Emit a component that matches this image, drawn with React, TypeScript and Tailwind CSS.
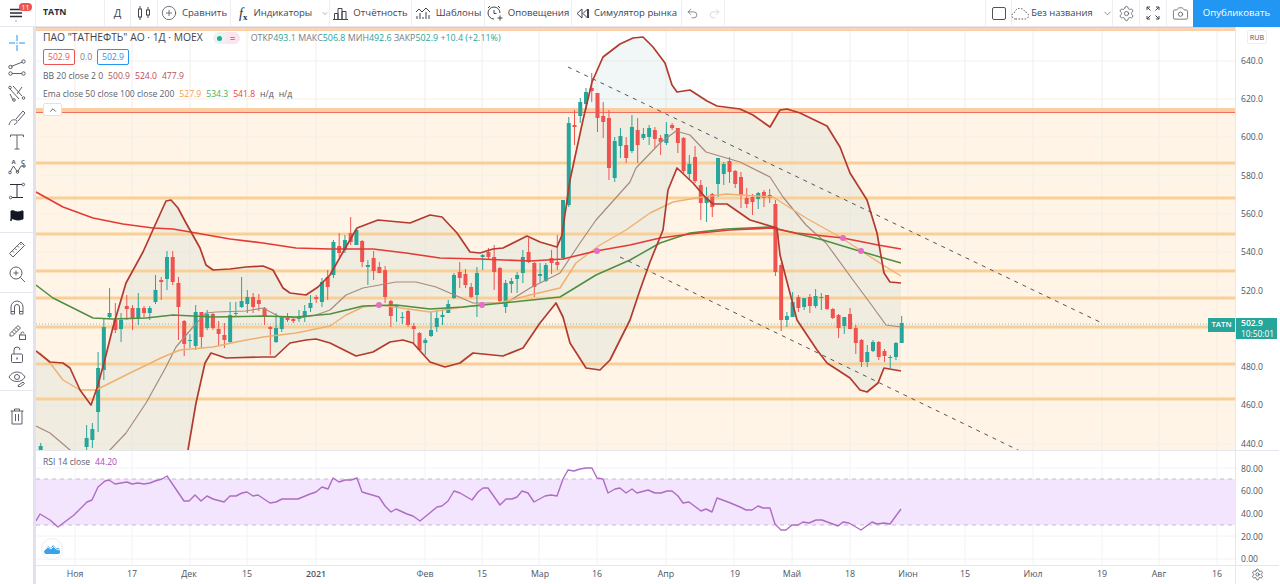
import type { ReactNode } from "react";
import { ChevronDown, ChevronUp, CirclePlus, Camera, Settings, Undo2, Redo2 } from "lucide-react";

// [high, body top, body bottom, low, up] in page pixels, one entry per day
const CANDLES: number[][] = [
  [443, 446, 455, 460, 1], [470, 480, 490, 500, 1], [470, 480, 490, 500, 1], [470, 480, 490, 500, 1], [470, 480, 490, 500, 1],
  [470, 480, 490, 500, 1], [470, 480, 490, 500, 1], [470, 480, 490, 500, 1], [425, 438, 447, 450, 1], [423, 429, 440, 448, 1],
  [352, 368, 412, 432, 1], [318, 327, 370, 380, 1], [288, 313, 317, 318, 1], [303, 320, 330, 333, 0], [313, 320, 329, 342, 1],
  [295, 306, 309, 320, 0], [305, 308, 318, 330, 0], [293, 308, 318, 325, 1], [306, 308, 313, 318, 0], [306, 308, 313, 320, 1],
  [275, 290, 302, 304, 1], [277, 280, 282, 300, 0], [251, 257, 279, 290, 1], [251, 257, 282, 285, 0], [277, 283, 307, 340, 0],
  [320, 321, 344, 356, 0], [334, 340, 341, 348, 1], [305, 312, 346, 350, 1], [312, 312, 337, 348, 0], [310, 314, 328, 330, 1],
  [313, 314, 328, 330, 0], [321, 329, 334, 345, 0], [323, 335, 340, 348, 0], [302, 315, 342, 343, 1], [302, 313, 314, 317, 1],
  [277, 301, 307, 308, 1], [290, 297, 304, 313, 1], [293, 297, 307, 313, 0], [294, 300, 304, 311, 0], [307, 308, 317, 325, 0],
  [326, 327, 329, 355, 0], [313, 328, 342, 343, 1], [317, 317, 329, 332, 1], [313, 318, 320, 322, 0], [318, 319, 321, 323, 0],
  [310, 317, 319, 322, 1], [305, 311, 317, 322, 1], [295, 303, 308, 312, 1], [295, 297, 299, 303, 0], [278, 282, 302, 307, 1],
  [270, 277, 287, 300, 0], [240, 242, 275, 278, 1], [233, 246, 253, 257, 0], [235, 240, 250, 253, 1], [217, 233, 242, 245, 0],
  [228, 230, 245, 245, 1], [240, 241, 262, 267, 0], [260, 265, 267, 285, 1], [251, 258, 271, 280, 0], [262, 267, 273, 273, 0],
  [266, 270, 297, 303, 0], [300, 301, 316, 327, 0], [305, 306, 308, 322, 1], [312, 317, 318, 324, 1], [310, 311, 325, 327, 0],
  [323, 326, 329, 343, 0], [332, 333, 350, 350, 0], [338, 340, 343, 355, 1], [312, 330, 336, 337, 1], [310, 318, 327, 332, 1],
  [310, 315, 317, 325, 1], [300, 304, 313, 313, 1], [273, 275, 298, 299, 1], [262, 272, 278, 288, 0], [269, 274, 285, 288, 0],
  [283, 287, 297, 298, 0], [267, 273, 295, 317, 1], [254, 255, 257, 270, 1], [248, 252, 257, 260, 0], [245, 257, 272, 290, 0],
  [267, 268, 301, 302, 0], [280, 283, 307, 313, 1], [278, 281, 284, 293, 1], [272, 275, 279, 293, 1], [250, 257, 273, 283, 1],
  [238, 252, 262, 263, 0], [262, 263, 287, 297, 0], [263, 274, 276, 283, 1], [263, 265, 281, 282, 1], [250, 258, 263, 274, 0],
  [235, 262, 265, 270, 0], [200, 200, 258, 260, 1], [117, 123, 205, 207, 1], [110, 125, 127, 145, 0], [98, 102, 116, 123, 1],
  [88, 92, 104, 110, 1], [73, 88, 91, 102, 0], [93, 93, 118, 132, 0], [102, 116, 122, 138, 0], [110, 118, 168, 180, 0],
  [137, 141, 178, 182, 1], [128, 136, 146, 158, 1], [137, 145, 158, 163, 0], [115, 127, 151, 153, 1], [118, 130, 145, 163, 0],
  [128, 134, 138, 140, 1], [125, 128, 137, 145, 1], [127, 130, 139, 148, 0], [135, 138, 142, 155, 0], [122, 134, 143, 145, 1],
  [123, 125, 128, 130, 0], [128, 128, 143, 153, 0], [137, 138, 171, 173, 0], [155, 164, 174, 180, 1], [146, 157, 181, 183, 0],
  [180, 185, 203, 220, 0], [187, 196, 203, 222, 1], [193, 194, 207, 217, 0], [158, 158, 184, 197, 1], [162, 164, 174, 185, 1],
  [157, 161, 172, 183, 0], [170, 171, 184, 188, 0], [172, 177, 195, 208, 0], [188, 198, 204, 208, 0], [194, 197, 202, 215, 0],
  [192, 193, 199, 209, 1], [190, 192, 198, 207, 0], [189, 195, 198, 203, 0], [200, 204, 272, 276, 0], [263, 265, 320, 331, 0],
  [312, 316, 320, 327, 1], [292, 302, 317, 317, 1], [295, 297, 308, 312, 0], [298, 298, 307, 310, 1], [294, 297, 306, 313, 0],
  [289, 296, 306, 308, 1], [293, 297, 298, 310, 1], [295, 295, 309, 310, 0], [308, 309, 318, 319, 0], [314, 315, 328, 338, 0],
  [317, 317, 326, 334, 1], [308, 314, 329, 329, 0], [325, 328, 343, 354, 0], [339, 340, 362, 367, 0], [345, 352, 362, 367, 1],
  [340, 342, 351, 352, 1], [341, 342, 357, 360, 0], [349, 351, 356, 362, 0], [355, 357, 358, 368, 1], [342, 343, 357, 360, 1],
  [316, 323, 343, 343, 1],
];

const BB_UPPER = "36,351 50,362 63,363 70,368 80,390 91,405 97,388 104,363 113,327 126,283 143,252 156,223 166,201 171,200 178,208 186,223 200,248 206,265 213,270 230,269 246,267 263,266 273,270 283,288 290,293 306,295 318,287 330,275 343,252 357,228 378,220 410,223 430,215 442,217 457,233 470,252 480,253 493,249 503,248 527,236 540,242 557,247 562,235 570,180 583,120 592,82 603,57 620,44 633,38 643,37 653,47 665,63 672,85 677,92 690,90 707,101 717,106 740,109 753,115 770,127 780,110 787,109 800,113 827,126 840,147 850,173 867,200 877,233 884,273 890,282 901,283";
const BB_LOWER = "188,450 196,403 205,363 211,353 226,358 263,357 275,357 290,343 306,340 316,339 330,343 340,348 356,356 373,352 390,342 403,340 413,343 430,362 445,367 460,363 473,353 503,356 523,348 540,323 556,303 563,317 570,343 586,368 600,370 610,360 630,320 640,290 650,262 663,230 668,190 677,168 693,183 705,197 713,204 727,204 750,220 777,228 780,255 797,320 817,350 827,363 850,378 860,390 867,392 878,383 884,368 901,371";
const MA20 = "36,426 50,433 70,450 90,470 110,450 126,433 146,403 166,367 176,347 193,327 206,313 216,312 246,311 263,308 280,317 300,318 316,315 330,310 346,295 363,288 396,282 416,282 436,287 473,303 506,303 530,288 560,273 580,243 596,220 630,182 636,168 660,143 676,131 690,135 706,152 723,157 740,162 770,177 783,197 806,225 826,243 853,280 873,307 886,325 901,327";
const EMA50 = "40,353 50,363 63,380 80,390 96,390 130,373 163,357 180,350 213,347 236,342 263,337 296,333 330,326 346,315 363,307 380,305 430,312 463,307 503,302 530,295 560,288 576,263 600,245 626,230 650,213 673,202 696,198 726,194 773,197 806,218 840,237 863,252 883,265 901,276";
const EMA100 = "36,285 53,298 73,308 93,318 113,319 146,318 173,315 213,317 263,316 296,317 330,314 363,306 396,305 430,309 463,307 503,303 560,297 596,275 630,260 660,243 690,233 726,229 770,227 823,240 856,250 880,257 901,263";
const EMA200 = "36,192 63,207 93,218 123,224 153,228 173,229 196,233 230,239 263,243 296,248 330,249 373,249 406,253 440,258 480,259 530,261 563,259 596,251 630,245 660,238 690,234 730,230 771,228 796,233 843,238 878,245 901,249";
const RSI = "36,522 40,515 50,521 58,528 74,516 87,503 92,501 98,488 105,482 109,481 115,485 127,483 132,485 138,484 144,485 150,484 155,482 162,480 167,477 184,502 189,502 195,496 201,502 207,497 213,500 224,503 230,497 236,497 242,494 247,493 253,497 258,496 270,504 276,503 282,500 298,500 310,495 316,493 322,488 328,490 333,479 339,483 345,481 351,481 357,479 362,493 379,498 385,507 391,513 396,510 407,515 413,517 420,522 437,508 442,507 448,502 454,492 460,494 472,501 478,493 483,489 488,489 500,506 506,500 512,500 517,498 522,492 528,494 534,503 545,497 551,496 557,497 563,480 568,471 574,472 580,470 586,469 592,469 597,479 603,480 608,494 615,490 620,489 626,494 632,490 637,494 648,491 655,494 661,494 667,492 672,492 678,497 683,504 689,503 701,512 706,510 712,513 717,499 728,503 740,508 746,511 752,511 758,507 763,509 770,509 775,525 781,531 786,531 792,526 798,526 803,523 809,524 816,521 822,521 838,527 843,523 849,524 861,531 872,523 877,525 884,524 890,525 901,510";

const BANDS = [163, 198, 234, 271, 298, 327, 364, 399];
const GRID_X = [75, 132, 190, 247, 316, 425, 482, 539, 597, 666, 734, 792, 850, 908, 965, 1033, 1102, 1159, 1217];
const GRID_Y = [61, 99, 137, 176, 214, 252, 291, 329, 367, 405, 444];
const PRICES = [
  ["640.0", 61], ["620.0", 99], ["600.0", 137], ["580.0", 176], ["560.0", 214], ["540.0", 252],
  ["520.0", 291], ["480.0", 367], ["460.0", 405], ["440.0", 444],
] as const;
const RSI_TICKS = [["80.00", 18], ["60.00", 40], ["40.00", 63], ["20.00", 86], ["0.00", 108]] as const;
const TIME_LABELS = [
  ["Ноя", 75], ["17", 132], ["Дек", 189], ["15", 247], ["2021", 316], ["Фев", 425], ["15", 482], ["Мар", 540], ["16", 597],
  ["Апр", 666], ["19", 735], ["Май", 792], ["18", 850], ["Июн", 908], ["15", 965], ["Июл", 1033], ["19", 1102], ["Авг", 1159], ["16", 1217],
] as const;
const CROSS_DOTS = [[379, 305], [482, 305], [597, 251], [843, 238], [861, 251]];

function Tool({ w, children, last }: { w: string; children: ReactNode; last?: boolean }) {
  return (
    <div className={`${w} flex h-full shrink-0 items-center justify-center gap-[5px] whitespace-nowrap ${last ? "" : "border-r border-[#eceef3]"}`}>
      {children}
    </div>
  );
}

function SideIcon({ children, tall }: { children: ReactNode; tall?: boolean }) {
  return (
    <div className={`flex ${tall ? "h-[23.5px]" : "h-[24.7px]"} items-center justify-center`}>
      <svg width="20" height="20" viewBox="0 0 20 20" fill="none" stroke="#5d606b" strokeWidth="1">
        {children}
      </svg>
    </div>
  );
}

function TopBar() {
  return (
    <div className="flex h-[27px] shrink-0 items-center border-b border-[#e4e7ee] text-[9.6px] text-[#40444f]">
      <Tool w="w-[36px]">
        <div className="relative h-full w-full">
          <svg className="absolute left-[9px] top-[8px]" width="14" height="15" viewBox="0 0 14 15" stroke="#2a2e39" strokeWidth="1.3">
            <path d="M1 1.5h12M1 5h12M1 8.5h12" />
            <circle cx="7" cy="13" r=".8" fill="#9598a1" stroke="none" />
          </svg>
          <span className="absolute left-[19px] top-[3px] flex h-[8px] w-[13px] items-center justify-center rounded-full bg-[#ef5350] text-[7px] leading-none text-white">11</span>
        </div>
      </Tool>
      <Tool w="w-[69px]">
        <span className="w-full pl-[7px] text-[8.8px] font-bold text-[#2a2e39]">TATN</span>
      </Tool>
      <Tool w="w-[26px]"><span className="text-[11px]">Д</span></Tool>
      <Tool w="w-[27px]">
        <svg width="16" height="16" viewBox="0 0 16 16" fill="none" stroke="#41454f" strokeWidth="1">
          <rect x="2.5" y="4" width="3" height="8" />
          <path d="M4 1v3M4 12v3M12 2v3M12 10v3" />
          <rect x="10.5" y="5" width="3" height="5" />
        </svg>
      </Tool>
      <Tool w="w-[73px]">
        <CirclePlus size={16} strokeWidth={1.1} color="#41454f" />
        <span>Сравнить</span>
      </Tool>
      <div className="flex h-full w-[99px] shrink-0 items-center border-r border-[#eceef3] pl-[8px]">
        <span className="font-['Liberation_Serif',serif] text-[14px] italic text-[#2a2e39]">f<sub className="text-[9px] font-bold not-italic">x</sub></span>
        <span className="ml-[6px]">Индикаторы</span>
        <ChevronDown className="ml-[9px]" size={11} strokeWidth={1.3} />
      </div>
      <Tool w="w-[82px]">
        <svg width="15" height="15" viewBox="0 0 15 15" fill="none" stroke="#41454f" strokeWidth="1">
          <path d="M1.5 13.5v-6h3.5v6M5 13.5v-11h4v11M9 13.5v-8h4v8M0 13.5h15" />
        </svg>
        <span>Отчётность</span>
      </Tool>
      <Tool w="w-[73px]">
        <svg width="16" height="14" viewBox="0 0 16 14" fill="none" stroke="#41454f" strokeWidth="1">
          <path d="M1 6l3-3 3 3 4-4 4 4M2 13v-3M5 13V7M8 13v-2M11 13V6M14 13V9" />
        </svg>
        <span>Шаблоны</span>
      </Tool>
      <Tool w="w-[87px]">
        <svg width="16" height="16" viewBox="0 0 16 16" fill="none" stroke="#41454f" strokeWidth="1">
          <path d="M7 14a6 6 0 1 1 6-6M7 5v3.5h2.5M1 3l2-2M13 3l-2-2M10.5 13h5M13 10.5v5" />
        </svg>
        <span>Оповещения</span>
      </Tool>
      <Tool w="w-[110px]">
        <svg width="13" height="11" viewBox="0 0 13 11" fill="none" stroke="#41454f" strokeWidth="1">
          <path d="M6 1L1 5.5 6 10zM11.5 1L7 5.5l4.5 4.5zM12.5 1v9" />
        </svg>
        <span>Симулятор рынка</span>
      </Tool>
      <Tool w="w-[43px]">
        <Undo2 size={13} strokeWidth={1.2} color="#50535e" />
        <Redo2 className="ml-[4px]" size={13} strokeWidth={1.2} color="#c8cad1" />
      </Tool>
      <div className="flex-1" />
      <div className="h-full w-px bg-[#eceef3]" />
      <Tool w="w-[26px]">
        <div className="h-[13px] w-[14px] rounded-[2px] border border-[#50535e]" />
      </Tool>
      <Tool w="w-[101px]">
        <svg className="shrink-0" width="18" height="13" viewBox="0 0 18 13" fill="none" stroke="#50535e" strokeWidth="1" strokeDasharray="1.5 1.5">
          <path d="M4.5 12H4a3.3 3.3 0 0 1-.5-6.5A5.5 5.5 0 0 1 14 5a3.5 3.5 0 0 1 0 7z" />
        </svg>
        <span className="ml-[-3px] text-[9.4px]">Без названия</span>
        <ChevronDown className="ml-[4px] shrink-0" size={11} strokeWidth={1.3} />
      </Tool>
      <Tool w="w-[27px]"><Settings size={17} strokeWidth={1} color="#41454f" /></Tool>
      <Tool w="w-[27px]">
        <svg width="14" height="14" viewBox="0 0 14 14" fill="none" stroke="#41454f" strokeWidth="1">
          <path d="M1 4V1h3M1 1l3.5 3.5M10 1h3v3M13 1L9.5 4.5M1 10v3h3M1 13l3.5-3.5M10 13h3v-3M13 13L9.5 9.5" />
        </svg>
      </Tool>
      <Tool w="w-[26px]" last><Camera size={17} strokeWidth={1} color="#41454f" /></Tool>
      <div className="flex h-[27px] w-[87px] shrink-0 items-center justify-center bg-[#2196f3] text-[9.6px] text-white">Опубликовать</div>
    </div>
  );
}

function SideBar() {
  return (
    <div className="box-content flex w-[33px] shrink-0 flex-col border-r-[3px] border-[#e0e3ef]">
      <div className="border-b border-[#e4e7ee] pb-[3px] pt-[4px]">
        <SideIcon>
          <path d="M10 2v6M10 12v6M2 10h6M12 10h6" stroke="#2196f3" />
          <circle cx="10" cy="10" r=".7" fill="#2196f3" stroke="none" />
        </SideIcon>
        <SideIcon>
          <path d="M4 8.5L15.5 4M5 15.5h10" />
          <circle cx="3.5" cy="9" r="1.7" /><circle cx="16.5" cy="3.5" r="1.7" /><circle cx="3.5" cy="15.5" r="1.7" /><circle cx="16.5" cy="15.5" r="1.7" />
        </SideIcon>
        <SideIcon>
          <path d="M3 6l9 10M6 3l9 10M10 11l5-7M3 11l3 6" />
          <circle cx="3" cy="4.5" r="1.3" /><circle cx="16.5" cy="15" r="1.3" /><circle cx="7" cy="17" r="1.3" />
        </SideIcon>
        <SideIcon>
          <path d="M2 18c1-4 3-6 7-5 2 .5 1 4-2 4.500M9 12l7-8 2 2-7 8" />
        </SideIcon>
        <SideIcon>
          <path d="M3.500 5V3h13v2M10 3v14M7.500 17h5" />
        </SideIcon>
        <SideIcon>
          <path d="M3 15l3.500-6 4 6 3.500-6 3.500 0" />
          <circle cx="3" cy="15.500" r="1.300" /><circle cx="10.500" cy="15" r="1.300" /><circle cx="17" cy="9" r="1.300" />
          <text x="4.500" y="6.500" fontSize="6" fontWeight="700" fill="#50535e" stroke="none">A</text>
          <text x="14" y="6.500" fontSize="6" fontWeight="700" fill="#50535e" stroke="none">C</text>
        </SideIcon>
        <SideIcon>
          <path d="M3 3.500h12M10 3.500v13M5 16.500h11" stroke="#2a2e39" />
          <circle cx="16.300" cy="3.500" r="1.300" /><circle cx="3.700" cy="16.500" r="1.300" />
        </SideIcon>
        <SideIcon>
          <path d="M4 15V5c3-1 4 1 6.500 1S15 4.500 16 5v8c-2 .5-3 1-5.500 1S6 12 4 13z" fill="#131722" stroke="#131722" />
        </SideIcon>
      </div>
      <div className="border-b border-[#e4e7ee] pb-[6px] pt-[4px]">
        <SideIcon>
          <path d="M2.500 14.500L14 3l3.500 3.500L6 18zM5.500 12l1.500 1.500M8 9.500l1.500 1.500M10.500 7l1.500 1.500M13 4.500l1.500 1.500" />
        </SideIcon>
        <SideIcon>
          <circle cx="9" cy="9" r="6" /><path d="M13.500 13.500L18 18M9 6.500v5M6.500 9h5" />
        </SideIcon>
      </div>
      <div className="border-b border-[#e4e7ee] pt-[3px]">
        <SideIcon tall>
          <path d="M4 16V9a6 6 0 0 1 12 0v7h-3.500V9a2.500 2.500 0 0 0-5 0v7zM4 13.500h3.500M12.500 13.500H16" />
        </SideIcon>
        <SideIcon tall>
          <path d="M3 12.500L11 4.500l2.500 2.500-8 8H3zM5 10.500l2.500 2.500M7 8.500l2.500 2.500M9 6.500l2.500 2.500" />
          <rect x="12.500" y="14" width="6" height="4.500" /><path d="M14 14v-1.500a1.500 1.500 0 0 1 3 0" />
        </SideIcon>
        <SideIcon tall>
          <rect x="4.500" y="9" width="11" height="8.500" rx="1" /><path d="M7 9V5a3 3 0 0 1 6 0" /><path d="M10 12.500v2" strokeWidth="1.400" />
        </SideIcon>
        <SideIcon tall>
          <path d="M2 9c2-3.500 5-5 8-5s6 1.500 8 5c-1.500 2.500-4 4.500-8 4.500S3.500 11.500 2 9z" /><circle cx="10" cy="9" r="2.500" /><path d="M11 17.500l5-3.500 1.500 1.500-4 3h-2.500z" />
        </SideIcon>
      </div>
      <div className="pt-[13px]">
        <SideIcon>
          <path d="M3.500 5h13M7.500 5V3h5v2M5 5v13h10V5M8.500 8v7M11.500 8v7" />
        </SideIcon>
      </div>
    </div>
  );
}

function Legend() {
  return (
    <div className="absolute left-[7px] top-[3px] flex flex-col text-[8.6px] text-[#5d606b]">
      <div className="flex h-[16px] items-center">
        <span className="text-[10.3px] text-[#40444f]">ПАО "ТАТНЕФТЬ" АО · 1Д · MOEX</span>
        <span className="ml-[10px] flex h-[12px] w-[27px] items-center rounded-full bg-[#e9f3f1]">
          <span className="ml-[4px] h-[5px] w-[5px] rounded-full bg-[#22ab94]" />
          <span className="ml-[4px] flex h-[12px] flex-1 items-center justify-center rounded-r-full bg-[#fbe6ef] text-[9px] font-bold leading-none text-[#e25fa0]">=</span>
        </span>
        <span className="ml-[11px] text-[8.9px] text-[#787b86]">ОТКР<span className="text-[#26a69a]">493.1</span> МАКС<span className="text-[#26a69a]">506.8</span> МИН<span className="text-[#26a69a]">492.6</span> ЗАКР<span className="text-[#26a69a]">502.9 +10.4 (+2.11%)</span></span>
      </div>
      <div className="mt-[3px] flex h-[16px] items-center">
        <span className="flex h-[16px] w-[32px] items-center justify-center rounded-[2px] border border-[#ef5350] bg-white text-[#ef5350]">502.9</span>
        <span className="ml-[5px] w-[17px] text-[#787b86]">0.0</span>
        <span className="flex h-[16px] w-[32px] items-center justify-center rounded-[2px] border border-[#2196f3] bg-white text-[#2196f3]">502.9</span>
      </div>
      <div className="mt-[3px] flex h-[16px] items-center">
        <span>BB 20 close 2 0</span>
        <span className="ml-[5px] text-[#b2555a]">500.9</span>
        <span className="ml-[5px] text-[#c0494e]">524.0</span>
        <span className="ml-[5px] text-[#b2555a]">477.9</span>
      </div>
      <div className="mt-[2px] flex h-[16px] items-center">
        <span>Ema close 50 close 100 close 200</span>
        <span className="ml-[5px] text-[#f0a04b]">527.9</span>
        <span className="ml-[5px] text-[#4caf50]">534.3</span>
        <span className="ml-[5px] text-[#ef3f3f]">541.8</span>
        <span className="ml-[5px] text-[#50535e]">н/д</span>
        <span className="ml-[5px] text-[#50535e]">н/д</span>
      </div>
      <div className="mt-[1px] flex h-[13px] w-[19px] items-center justify-center rounded-[2px] border border-[#e0e3eb] bg-white">
        <ChevronUp size={10} strokeWidth={2} color="#40444f" />
      </div>
    </div>
  );
}

function PriceChart() {
  return (
    <div className="relative h-[423px] overflow-hidden">
      <svg className="block" width="1199" height="423" viewBox="36 27 1199 423">
        <rect x="36" y="112" width="1199" height="338" fill="#fff4e6" />
        {GRID_X.map((x) => <line key={x} x1={x} x2={x} y1="27" y2="450" stroke="#f2ede6" />)}
        {GRID_Y.map((y) => <line key={y} x1="36" x2="1235" y1={y} y2={y} stroke="#f4f1ec" />)}
        <polygon points={`${BB_UPPER} ${BB_LOWER.split(" ").reverse().join(" ")} 188,470 36,470`} fill="#9fc5c5" fillOpacity="0.15" />
        <rect x="36" y="27" width="1199" height="1.500" fill="#f9bcbc" />
        <rect x="36" y="28.500" width="1199" height="2.500" fill="#fdd0a6" />
        <rect x="36" y="108" width="1199" height="5" fill="#fbcda0" />
        <line x1="36" x2="1235" y1="112.500" y2="112.500" stroke="#ef6f5f" />
        {BANDS.map((y) => <rect key={y} x="36" y={y - 1.5} width="1199" height="3" fill="#f9cf98" />)}
        <line x1="36" x2="1235" y1="324" y2="324" stroke="#26a69a" strokeOpacity=".55" strokeDasharray="1 2" />
        {CANDLES.map(([hi, top, bot, lo, up], i) => {
          const x = 40.7 + 5.74 * i;
          const c = up ? "#26a69a" : "#ef5350";
          return (
            <g key={i} fill={c}>
              <rect x={x - 0.5} y={hi} width="1" height={lo - hi} />
              <rect x={x - 2} y={top} width="4" height={Math.max(bot - top, 1)} />
            </g>
          );
        })}
        <g fill="none" strokeLinejoin="round">
          <polyline points={MA20} stroke="#a68a80" strokeWidth="1.200" />
          <polyline points={EMA50} stroke="#eeb06f" strokeWidth="1.400" />
          <polyline points={EMA100} stroke="#4f8f3f" strokeWidth="1.500" />
          <polyline points={EMA200} stroke="#e53935" strokeWidth="1.600" />
          <polyline points={BB_UPPER} stroke="#b23a2e" strokeWidth="1.700" />
          <polyline points={BB_LOWER} stroke="#b23a2e" strokeWidth="1.700" />
          <line x1="568" y1="67" x2="1103" y2="323.500" stroke="#555" strokeDasharray="4 5" />
          <line x1="620" y1="257" x2="1020" y2="451" stroke="#555" strokeDasharray="4 5" />
        </g>
        {CROSS_DOTS.map(([x, y]) => <circle key={x} cx={x} cy={y} r="3" fill="#e76cc6" />)}
      </svg>
      <Legend />
      <div className="absolute left-[1172px] top-[291px] flex h-[14px] w-[27px] items-center justify-center bg-[#26a69a] text-[7.8px] font-semibold text-white">TATN</div>
    </div>
  );
}

function RsiPane() {
  return (
    <div className="relative h-[115px] border-t border-[#e4e7ee]">
      <svg className="block" width="1199" height="114" viewBox="36 452 1199 114">
        {GRID_X.map((x) => <line key={x} x1={x} x2={x} y1="452" y2="566" stroke="#f1f2f6" />)}
        {[469, 491, 514, 537, 560].map((y) => <line key={y} x1="36" x2="1235" y1={y} y2={y} stroke="#f1f2f6" />)}
        <rect x="36" y="480" width="1199" height="46" fill="#f3e5fd" />
        <line x1="36" x2="1235" y1="480" y2="480" stroke="#c9b8d4" strokeDasharray="4 4" />
        <line x1="36" x2="1235" y1="526" y2="526" stroke="#c9b8d4" strokeDasharray="4 4" />
        <polyline points={RSI} fill="none" stroke="#ae6cc4" strokeWidth="1.400" strokeLinejoin="round" />
      </svg>
      <div className="absolute left-[7px] top-[3px] flex h-[16px] items-center text-[8.6px] text-[#5d606b]">
        RSI 14 close<span className="ml-[5px] text-[#ab47bc]">44.20</span>
      </div>
      <div className="absolute left-[5px] top-[87px] flex h-[22px] w-[22px] items-center justify-center rounded-full border border-[#eceef3] bg-white">
        <svg width="16" height="10" viewBox="0 0 16 10" fill="#3aa2ea">
          <path d="M0 7l4-5 3 2 2-3 3 3h2c1.500 0 2 1.500 2 3v1c0 1-.5 2-2 2H2C.5 10 0 8.500 0 7z" />
          <path d="M0 6.500L4 3l3 2 2.500-2.500L12 5l4 1" fill="none" stroke="#fff" strokeWidth=".9" />
        </svg>
      </div>
    </div>
  );
}

function TimeAxis() {
  return (
    <div className="relative h-[18px] border-t border-[#e4e7ee] text-[8.8px] text-[#50535e]">
      {TIME_LABELS.map(([t, x]) => (
        <span key={`${t}${x}`} className={`absolute top-[2px] w-[30px] -translate-x-1/2 text-center ${t === "2021" ? "font-semibold" : ""}`} style={{ left: x - 36 }}>{t}</span>
      ))}
    </div>
  );
}

function PriceAxis() {
  return (
    <div className="flex w-[44px] shrink-0 flex-col border-l border-[#e4e7ee] text-[8.6px] text-[#50535e]">
      <div className="relative h-[423px]">
        <div className="absolute left-[11px] top-[3px] flex h-[14px] w-[20px] items-center justify-center rounded-[2px] border border-[#eceef3] text-[7.2px]">RUB</div>
        {PRICES.map(([t, y]) => (
          <span key={t} className="absolute left-[5px] -translate-y-1/2" style={{ top: y - 27 }}>{t}</span>
        ))}
        <div className="absolute left-0 top-[291px] flex h-[21px] w-[41px] flex-col items-start bg-[#26a69a] pl-[5px] pt-[1px] leading-[9.5px] text-white">
          <span className="text-[8.6px] font-semibold">502.9</span>
          <span className="text-[8.4px]">10:50:01</span>
        </div>
      </div>
      <div className="relative h-[115px] border-t border-[#e4e7ee]">
        {RSI_TICKS.map(([t, y]) => (
          <span key={t} className="absolute left-[5px] -translate-y-1/2" style={{ top: y }}>{t}</span>
        ))}
      </div>
      <div className="flex h-[18px] items-center justify-center border-t border-[#e4e7ee]">
        <Settings size={13} strokeWidth={1.2} color="#2a2e39" />
      </div>
    </div>
  );
}

export default function App() {
  return (
    <div className="flex h-[584px] w-[1280px] flex-col overflow-hidden bg-white font-['Open_Sans','Noto_Sans',sans-serif]">
      <TopBar />
      <div className="flex flex-1">
        <SideBar />
        <div className="w-[1199px] shrink-0">
          <PriceChart />
          <RsiPane />
          <TimeAxis />
        </div>
        <PriceAxis />
      </div>
    </div>
  );
}
